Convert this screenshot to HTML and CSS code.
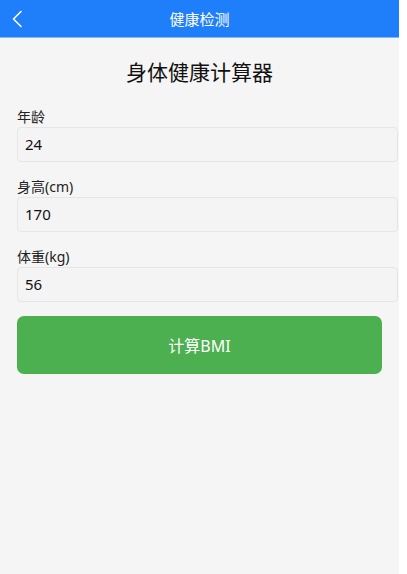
FILE: index.html
```html
<!DOCTYPE html>
<html lang="zh">
<head>
<meta charset="utf-8">
<title>健康检测</title>
<link rel="stylesheet" href="styles.css">
</head>
<body>
<div class="app">
  <header class="topbar">
    <span class="back">
      <svg width="12" height="18" viewBox="0 0 12 18"><path d="M10 1.5 L2.5 9 L10 16.5" fill="none" stroke="#fff" stroke-width="1.6" stroke-linecap="round" stroke-linejoin="round"/></svg>
    </span>
    <span class="topbar-title">健康检测</span>
  </header>
  <main class="content">
    <h1 class="title">身体健康计算器</h1>
    <div class="field">
      <label class="label">年龄</label>
      <div class="input">24</div>
    </div>
    <div class="field">
      <label class="label">身高(cm)</label>
      <div class="input">170</div>
    </div>
    <div class="field">
      <label class="label">体重(kg)</label>
      <div class="input">56</div>
    </div>
    <button class="btn">计算BMI</button>
  </main>
</div>
</body>
</html>
```
FILE: styles.css
```css
* { box-sizing: border-box; }
html, body { margin: 0; padding: 0; background: #ffffff; }
body { font-family: "Noto Sans", "Noto Sans CJK SC", sans-serif; color: #222; }
.app {
  width: 399px;
  min-height: 574px;
  background: #f5f5f5;
}
.topbar {
  height: 38px;
  background: #1f7ffb;
  border-bottom: 1px solid #86b6f6;
  display: flex;
  align-items: center;
  justify-content: center;
  position: relative;
}
.back {
  position: absolute;
  left: 11px;
  top: 10px;
  display: flex;
}
.topbar-title {
  color: #fff;
  font-size: 15px;
  line-height: 20px;
}
.content {
  padding: 19px 17px 0;
  display: flex;
  flex-direction: column;
}
.title {
  margin: 0 0 20px;
  font-weight: 400;
  font-size: 21px;
  line-height: 30px;
  text-align: center;
  color: #111;
}
.field {
  display: flex;
  flex-direction: column;
  margin-bottom: 15px;
}
.label {
  font-size: 14px;
  line-height: 20px;
  color: #222;
}
.input {
  width: 381px;
  height: 35px;
  border: 1px solid #e6e6e6;
  border-radius: 4px;
  background: #f4f4f4;
  padding: 0 7px;
  font-size: 15px;
  line-height: 33px;
  color: #111;
}
.btn {
  margin-top: -1px;
  width: 365px;
  height: 58px;
  border: none;
  border-radius: 7px;
  background: #4caf50;
  color: #fff;
  font-family: inherit;
  font-size: 16px;
}
```
